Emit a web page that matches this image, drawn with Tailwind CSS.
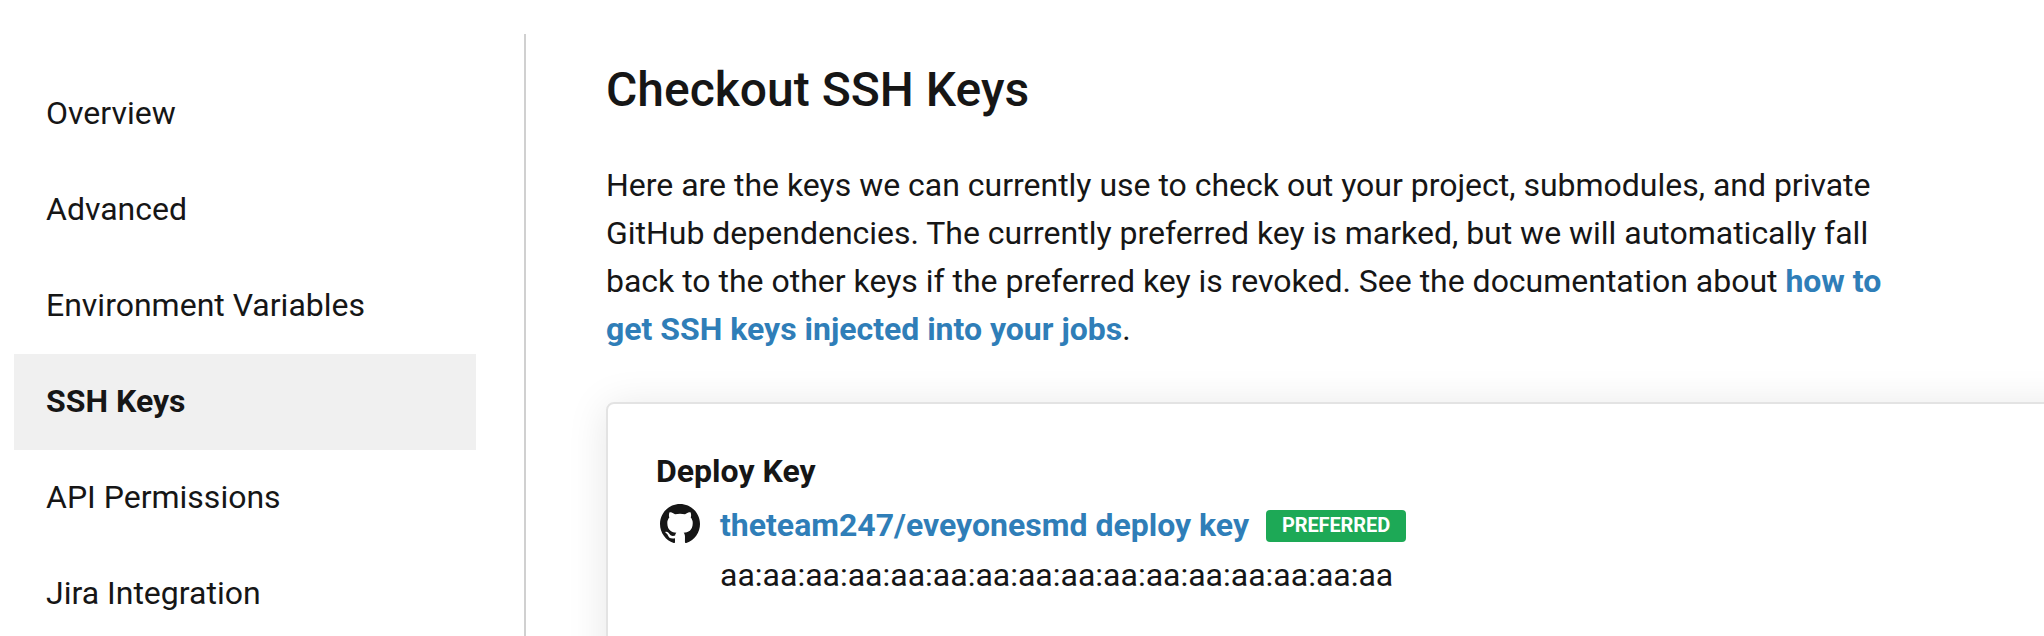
<!DOCTYPE html>
<html lang="en"><head><meta charset="utf-8"><title>SSH Keys</title>
<script src="https://cdn.jsdelivr.net/npm/@tailwindcss/browser@4"></script></head>
<body class="bg-white font-['Roboto',sans-serif] text-[32px] leading-[48px] text-[#161616]">
<div class="flex h-[636px] overflow-hidden">
<aside class="w-[526px] shrink-0 mt-[34px] pt-[32px] pl-[14px] pr-[48px] border-r-2 border-[#d0d0d0]">
<nav class="flex flex-col">
<a class="h-24 px-8 pb-0.5 flex items-center">Overview</a>
<a class="h-24 px-8 pb-0.5 flex items-center">Advanced</a>
<a class="h-24 px-8 pb-0.5 flex items-center">Environment Variables</a>
<a class="h-24 px-8 pb-0.5 flex items-center bg-[#f0f0f0] font-bold">SSH Keys</a>
<a class="h-24 px-8 pb-0.5 flex items-center">API Permissions</a>
<a class="h-24 px-8 pb-0.5 flex items-center">Jira Integration</a>
</nav></aside>
<main class="grow pl-20 pt-[60px]">
<h1 class="text-[48px] leading-[60px] font-medium">Checkout SSH Keys</h1>
<p class="mt-[41px] whitespace-nowrap tracking-[-0.012px]">Here are the keys we can currently use to check out your project, submodules, and private<br>GitHub dependencies. The currently preferred key is marked, but we will automatically fall<br>back to the other keys if the preferred key is revoked. See the documentation about <a class="font-bold text-[#2f7eb8]">how to<br>get SSH keys injected into your jobs</a>.</p>
<section class="mt-[49px] h-[400px] w-[1600px] rounded-lg border-2 border-[#e3e3e3] shadow-[0_4px_40px_rgba(0,0,0,0.1)] pt-[43px] pl-12">
<h2 class="font-bold">Deploy Key</h2>
<div class="flex items-center h-14 pt-1">
<svg class="ml-1 mb-0.5 w-10 h-10 shrink-0" viewBox="0 0 16 16" fill="#161616"><path d="M8 0C3.58 0 0 3.58 0 8c0 3.54 2.29 6.53 5.47 7.59.4.07.55-.17.55-.38 0-.19-.01-.82-.01-1.49-2.01.37-2.53-.49-2.69-.94-.09-.23-.48-.94-.82-1.13-.28-.15-.68-.52-.01-.53.63-.01 1.08.58 1.23.82.72 1.21 1.87.87 2.33.66.07-.52.28-.87.51-1.07-1.78-.2-3.64-.89-3.64-3.95 0-.87.31-1.59.82-2.15-.08-.2-.36-1.02.08-2.12 0 0 .67-.21 2.2.82A7.6 7.6 0 0 1 8 3.86c.68 0 1.36.09 2 .27 1.53-1.04 2.2-.82 2.2-.82.44 1.1.16 1.92.08 2.12.51.56.82 1.27.82 2.15 0 3.07-1.87 3.75-3.65 3.95.29.25.54.73.54 1.48 0 1.07-.01 1.93-.01 2.2 0 .21.15.46.55.38A8.01 8.01 0 0 0 16 8c0-4.42-3.58-8-8-8z"/></svg>
<a class="ml-5 font-bold text-[#2f7eb8]">theteam247/eveyonesmd deploy key</a>
<span class="ml-[17px] mt-0.5 w-[140px] h-8 rounded bg-[#1da956] text-white text-[20px] leading-[30px] tracking-[-0.1px] text-center font-bold">PREFERRED</span>
</div>
<div class="pl-16">aa:aa:aa:aa:aa:aa:aa:aa:aa:aa:aa:aa:aa:aa:aa:aa</div>
</section></main></div></body></html>
